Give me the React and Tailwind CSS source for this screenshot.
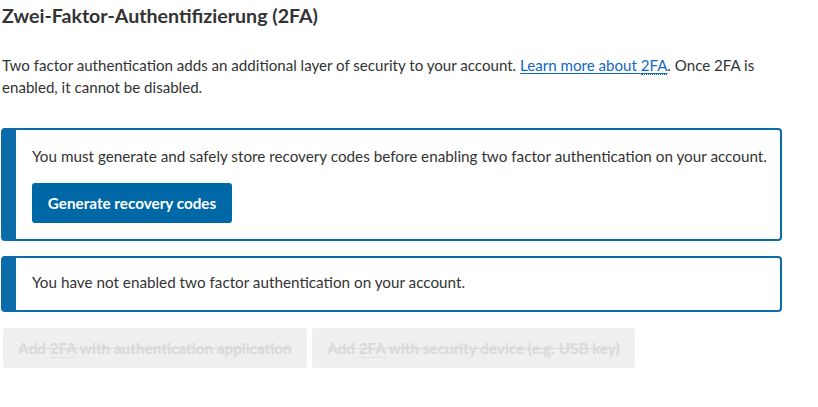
export default function App() {
  const font = { fontFamily: 'Lato, "Noto Sans", sans-serif' };
  return (
    <div className="w-[818px] h-[407px] bg-white text-[#333] overflow-hidden" style={font}>
      <div className="pl-[2px] pr-[36px]">
        <h2 className="text-[19.6px] font-bold leading-[28px] pt-[2px]">Zwei-Faktor-Authentifizierung (2FA)</h2>
        <p className="mt-[24px] text-[15.1px] leading-[22px]">
          Two factor authentication adds an additional layer of security to your account.{' '}
          <a className="text-[#1068bf] underline underline-offset-2 decoration-[#1068bf]">
            Learn more about <abbr className="no-underline border-b border-dotted">2FA</abbr>
          </a>
          . Once 2FA is enabled, it cannot be disabled.
        </p>
        <div className="mt-[30px] ml-[-1px] border-2 border-l-[15px] border-[#0b6aa8] rounded-[4px] pl-[16px] pr-[2px] pt-[15px] pb-[16px]">
          <p className="text-[15.25px] leading-[22px] whitespace-nowrap">
            You must generate and safely store recovery codes before enabling two factor authentication on your account.
          </p>
          <button className="mt-[16px] h-[40px] w-[200px] bg-[#0068a6] text-white font-bold text-[15.25px] rounded-[3px]">
            Generate recovery codes
          </button>
        </div>
        <div className="mt-[15px] ml-[-1px] border-2 border-l-[15px] border-[#0b6aa8] rounded-[4px] pl-[16px] pr-4 pt-[13px] pb-[17px]">
          <p className="text-[15.25px] leading-[22px]">You have not enabled two factor authentication on your account.</p>
        </div>
        <div className="mt-[16px] flex gap-[5px] pl-[1px]">
          <button className="h-[40px] w-[304px] bg-[#efefef] text-[#d9d9d9] font-bold text-[15.25px] rounded-[3px] line-through">
            Add <abbr className="border-b border-dotted no-underline">2FA</abbr> with authentication application
          </button>
          <button className="h-[40px] w-[323px] bg-[#efefef] text-[#d9d9d9] font-bold text-[15.25px] rounded-[3px] line-through">
            Add <abbr className="border-b border-dotted no-underline">2FA</abbr> with security device (e.g. USB key)
          </button>
        </div>
      </div>
    </div>
  );
}
